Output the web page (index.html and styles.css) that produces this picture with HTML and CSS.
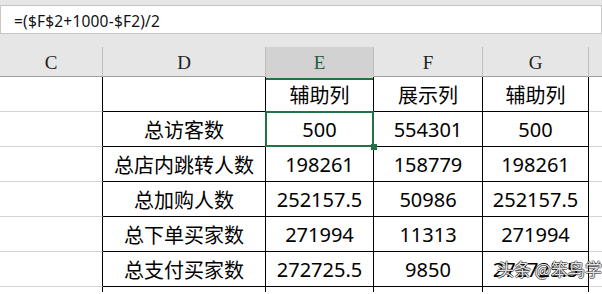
FILE: index.html
```html
<!DOCTYPE html>
<html lang="zh-CN">
<head>
  <meta charset="UTF-8">
  <title>辅助列</title>
  <link rel="stylesheet" href="styles.css">
</head>
<body>
  <div class="toolbar">
    <div class="formula-bar">=($F$2+1000-$F2)/2</div>
  </div>

  <div class="col-heads">
    <div class="head">C</div>
    <div class="head">D</div>
    <div class="head current">E</div>
    <div class="head">F</div>
    <div class="head">G</div>
    <div class="head last"></div>
  </div>

  <div class="sheet">
    <div class="cell free"></div>
    <div class="cell"></div>
    <div class="cell">辅助列</div>
    <div class="cell">展示列</div>
    <div class="cell">辅助列</div>
    <div class="cell free"></div>

    <div class="cell free"></div>
    <div class="cell">总访客数</div>
    <div class="cell active">500</div>
    <div class="cell">554301</div>
    <div class="cell">500</div>
    <div class="cell free"></div>

    <div class="cell free"></div>
    <div class="cell">总店内跳转人数</div>
    <div class="cell">198261</div>
    <div class="cell">158779</div>
    <div class="cell">198261</div>
    <div class="cell free"></div>

    <div class="cell free"></div>
    <div class="cell">总加购人数</div>
    <div class="cell">252157.5</div>
    <div class="cell">50986</div>
    <div class="cell">252157.5</div>
    <div class="cell free"></div>

    <div class="cell free"></div>
    <div class="cell">总下单买家数</div>
    <div class="cell">271994</div>
    <div class="cell">11313</div>
    <div class="cell">271994</div>
    <div class="cell free"></div>

    <div class="cell free"></div>
    <div class="cell">总支付买家数</div>
    <div class="cell">272725.5</div>
    <div class="cell">9850</div>
    <div class="cell">272725.5</div>
    <div class="cell free"></div>

    <!-- top sliver of the next row -->
    <div class="cell free"></div>
    <div class="cell"></div>
    <div class="cell"></div>
    <div class="cell"></div>
    <div class="cell"></div>
    <div class="cell free"></div>
  </div>

  <div class="watermark">头条 @笨鸟学</div>
</body>
</html>
```

FILE: styles.css
```css
body {
  margin: 0;
  width: 602px;
  height: 294px;
  overflow: hidden;
  position: relative;
  background: #fff;
  font-family: 'Noto Sans', 'Noto Sans CJK SC', sans-serif;
  color: #000;
}
.toolbar {
  background: #e6e6e6;
  padding: 5px 0 13px 0;
}
.formula-bar {
  height: 29px;
  box-sizing: border-box;
  background: #fff;
  border: 1px solid #c6c6c6;
  padding: 3px 0 0 13px;
  font-size: 15.5px;
  line-height: 25px;
  letter-spacing: 0.2px;
  color: #111;
}
.col-heads,
.sheet {
  display: grid;
  grid-template-columns: 103px 163px 108px 109px 106px 1fr;
}
.col-heads {
  height: 30px;
  background: #e6e6e6;
  border-bottom: 1px solid #a0a0a0;
  box-sizing: border-box;
}
.head {
  border-right: 1px solid #bdbdbd;
  font-family: 'Liberation Serif', serif;
  font-size: 19px;
  line-height: 31px;
  text-align: center;
  color: #222;
}
.head.current {
  background: #d2d2d2;
  color: #1f5f3a;
  border-bottom: 2px solid #217346;
  margin-bottom: -1px;
}
.head.last {
  border-right: none;
}
.sheet {
  grid-template-rows: repeat(6, 35px) 5px;
}
.cell {
  box-sizing: border-box;
  border-right: 1px solid #000;
  border-bottom: 1px solid #000;
  font-size: 20px;
  display: flex;
  align-items: center;
  justify-content: center;
  position: relative;
}
.cell.free {
  border-bottom-color: #d4d4d4;
}
.sheet .cell:nth-child(6n) {
  border-right: none;
}
.sheet .cell:nth-last-child(-n+6) {
  border-bottom: none;
}
.cell.active::after {
  content: "";
  position: absolute;
  top: -1px;
  left: -1px;
  right: -1px;
  bottom: -1px;
  border: 2px solid #217346;
}
.cell.active::before {
  content: "";
  position: absolute;
  right: -4px;
  bottom: -4px;
  width: 6px;
  height: 6px;
  background: #217346;
  z-index: 1;
}
.watermark {
  position: absolute;
  left: 497px;
  top: 256px;
  white-space: nowrap;
  font-family: 'Noto Sans CJK SC', sans-serif;
  font-size: 17px;
  color: rgba(255, 255, 255, 0.9);
  text-shadow: 1px 0 0 rgba(0,0,0,0.55), -1px 0 0 rgba(0,0,0,0.55),
               0 1px 0 rgba(0,0,0,0.55), 0 -1px 0 rgba(0,0,0,0.55);
}
```
